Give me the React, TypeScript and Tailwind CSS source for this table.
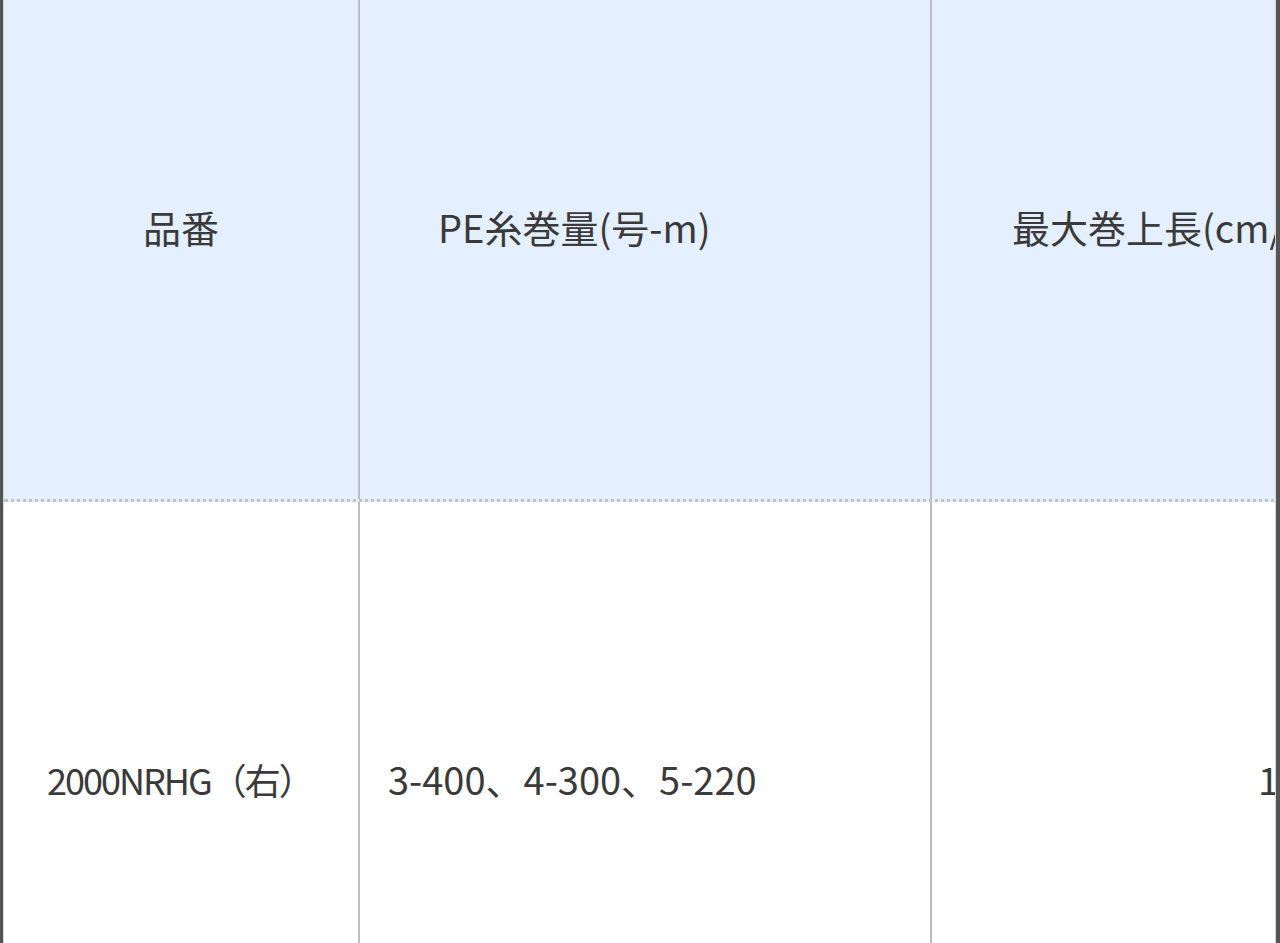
const font = "font-['Noto_Sans_CJK_JP','Noto_Sans',sans-serif] text-[#3a3a3a] whitespace-nowrap";

export default function App() {
  return (
    <div className="flex h-[943px] w-[1280px] overflow-hidden bg-white">
      <div className="w-[3px] shrink-0 bg-[#545454]" />
      <div className="flex-1 overflow-hidden border-x border-[#d6d6d6]">
        <div className="mt-[-47px] w-[1500px]">
          {/* header row */}
          <div className={`${font} flex h-[549px] border-b-[3px] border-dotted border-[#c2c2c2] bg-[#e4f0ff] text-[38px]`}>
            <div className="flex w-[354px] items-center justify-center">品番</div>
            <div className="flex w-[572px] items-center border-l-2 border-[#bdbdbd] pl-[78px]">PE糸巻量(号-m)</div>
            <div className="flex w-[574px] items-center border-l-2 border-[#bdbdbd] pl-[80px]">最大巻上長(cm/ハンドル1回転)</div>
          </div>
          {/* body row */}
          <div className={`${font} flex h-[553px] text-[38px]`}>
            <div className="flex w-[354px] items-center pl-[43px] text-[36px] tracking-[-2px]">2000NRHG（右）</div>
            <div className="flex w-[572px] items-center border-l-2 border-[#bdbdbd] pl-[28px]">3-400、4-300、5-220</div>
            <div className="flex w-[574px] items-center border-l-2 border-[#bdbdbd] pl-[326px]">104</div>
          </div>
        </div>
      </div>
      <div className="w-[4px] shrink-0 bg-[#545454]" />
    </div>
  );
}
